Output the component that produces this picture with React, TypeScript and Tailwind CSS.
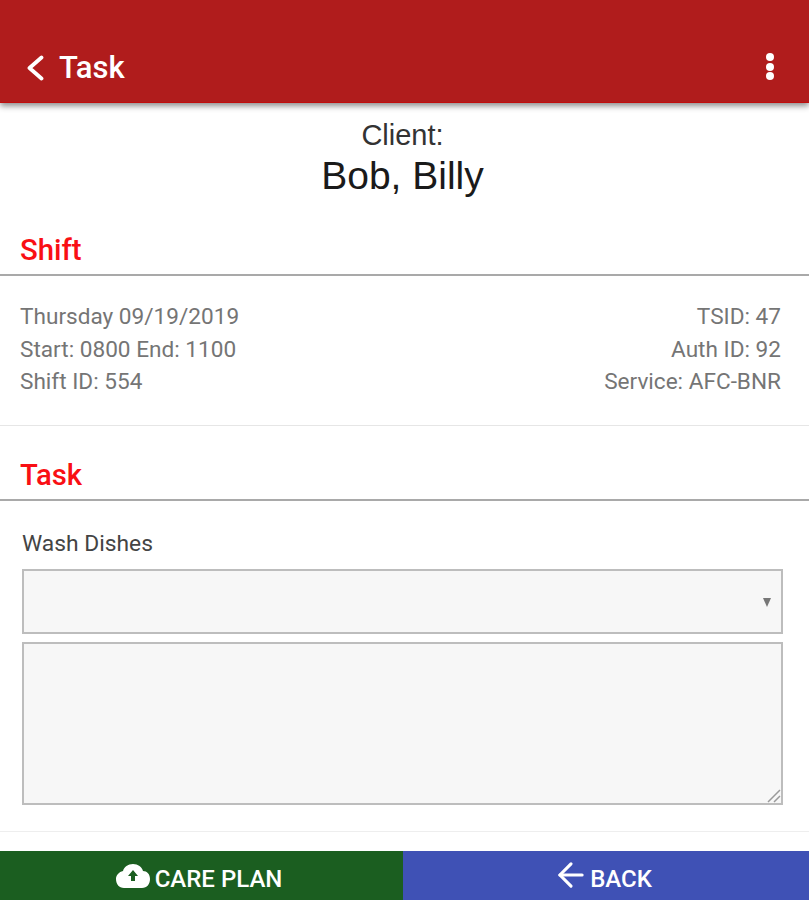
import React from 'react'
import { ArrowLeft } from 'lucide-react'

const ShiftRow = ({ left, right }: { left: string; right: string }) => (
  <div className="flex justify-between h-[32.5px] items-center">
    <span>{left}</span>
    <span>{right}</span>
  </div>
)

const SectionTitle = ({ label }: { label: string }) => (
  <div className="border-b-2 border-[#a9a9a9] h-[46px] pl-5 pb-[2px] flex items-center">
    <h2 className="text-[29.3px] font-medium leading-none text-[#f90f14]">{label}</h2>
  </div>
)

const App = () => {
  return (
    <div className="relative w-[809px] h-[900px] overflow-hidden bg-white font-['Roboto',sans-serif]">
      <header className="h-[103px] bg-[#b01c1c] border-b border-[#c00d0d] shadow-[0_3px_6px_rgba(0,0,0,0.45)] flex items-end justify-between pb-[14px] pl-[26px] pr-[35px] text-white">
        <div className="flex items-center gap-[15px]">
          <svg width="18" height="26" viewBox="0 0 18 26" fill="none" stroke="white" strokeWidth="3.8" strokeLinecap="round" strokeLinejoin="round">
            <path d="M15.5 2.5 3.5 13l12 10.5" />
          </svg>
          <span className="text-[31px] font-medium leading-[40px]">Task</span>
        </div>
        <div className="flex flex-col gap-[1.5px] pb-[8px]">
          <span className="w-[8px] h-[8px] rounded-full bg-white" />
          <span className="w-[8px] h-[8px] rounded-full bg-white" />
          <span className="w-[8px] h-[8px] rounded-full bg-white" />
        </div>
      </header>

      <div className="text-center font-['Liberation_Sans',sans-serif] pt-[16px] pr-[4px]">
        <div className="text-[29px] leading-[32px] text-[#333]">Client:</div>
        <div className="text-[39px] leading-[49px] text-[#1a1a1a]">Bob, Billy</div>
      </div>

      <div className="mt-[30px]">
        <SectionTitle label="Shift" />
      </div>
      <div className="px-5 pr-[28px] pt-[25px] h-[150px] border-b border-[#e6e6e6] text-[22.6px] text-[#757575]">
        <ShiftRow left="Thursday 09/19/2019" right="TSID: 47" />
        <ShiftRow left="Start: 0800 End: 1100" right="Auth ID: 92" />
        <ShiftRow left="Shift ID: 554" right="Service: AFC-BNR" />
      </div>

      <div className="mt-[29px]">
        <SectionTitle label="Task" />
      </div>
      <div className="pl-[22px] pr-[26px] pt-[28px] h-[331px] border-b border-[#eee]">
        <div className="text-[22.8px] leading-[30px] text-[#444]">Wash Dishes</div>
        <div className="relative mt-[10px] h-[65px] bg-[#f7f7f7] border-2 border-[#bdbdbd]">
          <span className="absolute right-[10px] top-[27px] w-0 h-0 border-x-[4.5px] border-x-transparent border-t-[9px] border-t-[#777]" />
        </div>
        <div className="relative mt-[8px] h-[163px] bg-[#f7f7f7] border-2 border-[#bdbdbd]">
          <svg className="absolute right-0 bottom-0" width="14" height="14" viewBox="0 0 14 14" fill="none" stroke="#9a9a9a" strokeWidth="1.5">
            <path d="M1 13 13 1M7 13l6-6" />
          </svg>
        </div>
      </div>

      <footer className="absolute bottom-0 left-0 w-full h-[49px] flex text-white">
        <button className="w-[403px] bg-[#1b5e20] flex items-center justify-center gap-[5px] pr-[5px]">
          <svg width="34" height="26" viewBox="0 0 34 26" fill="white">
            <path d="M17 1c5 0 9 3 10 7 4 0 7 3 7 8 0 5-3 9-8 9H8c-5 0-8-4-8-9 0-4 3-7 7-8 1-4 5-7 10-7Z" />
            <path d="M17 7l-5 6h3v5h4v-5h3Z" fill="#1b5e20" />
          </svg>
          <span className="text-[24px] font-medium leading-none mt-[6px] whitespace-nowrap">CARE PLAN</span>
        </button>
        <button className="flex-1 bg-[#3f51b5] flex items-center justify-center pr-[8px]">
          <ArrowLeft size={38} strokeWidth={2} className="-mt-[1px]" />
          <span className="text-[24px] font-medium leading-none mt-[6px]">BACK</span>
        </button>
      </footer>
    </div>
  )
}

export default App
